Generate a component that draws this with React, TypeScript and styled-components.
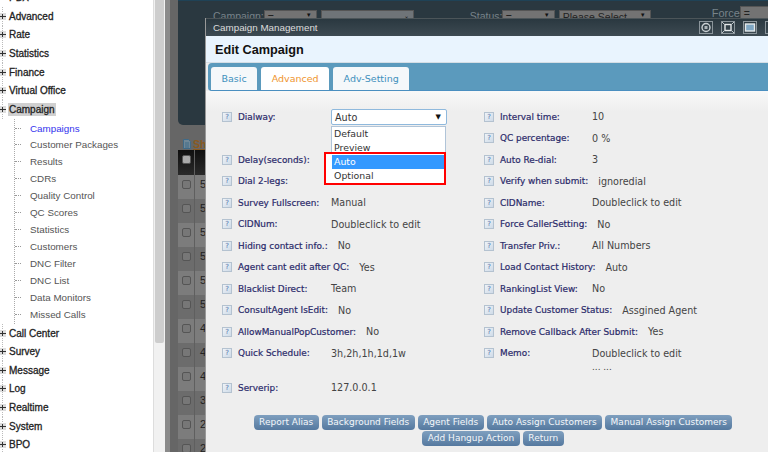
import React from "react";
import styled, { createGlobalStyle } from "styled-components";

const topMenu = ["Advanced", "Rate", "Statistics", "Finance", "Virtual Office", "Campaign"];
const bottomMenu = ["Call Center", "Survey", "Message", "Log", "Realtime", "System", "BPO"];
const subMenu = ["Campaigns", "Customer Packages", "Results", "CDRs", "Quality Control", "QC Scores", "Statistics", "Customers", "DNC Filter", "DNC List", "Data Monitors", "Missed Calls"];

const leftFields = [
  ["Delay(seconds):", ""],
  ["Dial 2-legs:", ""],
  ["Survey Fullscreen:", "Manual"],
  ["CIDNum:", "Doubleclick to edit"],
  ["Hiding contact info.:", "No"],
  ["Agent cant edit after QC:", "Yes"],
  ["Blacklist Direct:", "Team"],
  ["ConsultAgent IsEdit:", "No"],
  ["AllowManualPopCustomer:", "No"],
  ["Quick Schedule:", "3h,2h,1h,1d,1w"],
];

const rightFields = [
  ["Interval time:", "10"],
  ["QC percentage:", "0 %"],
  ["Auto Re-dial:", "3"],
  ["Verify when submit:", "ignoredial"],
  ["CIDName:", "Doubleclick to edit"],
  ["Force CallerSetting:", "No"],
  ["Transfer Priv.:", "All Numbers"],
  ["Load Contact History:", "Auto"],
  ["RankingList View:", "No"],
  ["Update Customer Status:", "Assgined Agent"],
  ["Remove Callback After Submit:", "Yes"],
  ["Memo:", "Doubleclick to edit"],
];

const HelpIcon = () => <HelpBox>?</HelpBox>;

const Field = ({ label, value }: { label: string; value: string }) => (
  <FieldRow>
    <HelpIcon />
    <FieldLabel>{label}</FieldLabel>
    <FieldValue>{value}</FieldValue>
  </FieldRow>
);

const WindowIcon = ({ kind }: { kind: string }) => (
  <WinButton>
    <svg width="12" height="11" viewBox="0 0 12 11" fill="none">
      {kind === "circle" && (
        <>
          <circle cx="6" cy="5.5" r="4" stroke="#c9cfd2" strokeWidth="1.4" />
          <rect x="4.5" y="4" width="3" height="3" fill="#aeb6ba" />
        </>
      )}
      {kind === "max" && (
        <>
          <rect x="3" y="2.5" width="6" height="6" stroke="#e4e8ea" strokeWidth="1.4" />
          <path d="M0 0l2.5 2.5M12 0L9.5 2.5M0 11l2.5-2.5M12 11L9.5 8.5" stroke="#bfc6ca" />
        </>
      )}
      {kind === "min" && <rect x="1.5" y="2" width="9" height="7" stroke="#e4e8ea" strokeWidth="1.4" fill="#7fa7c4" />}
      {kind === "close" && <path d="M3 2.5l6 6M9 2.5l-6 6" stroke="#e4e8ea" strokeWidth="1.4" />}
    </svg>
  </WinButton>
);

const App = () => {
  return (
    <Page>
      <GlobalStyle />
      <Sidebar>
        <ClippedItem>PBX</ClippedItem>
        {topMenu.map((m) => (
          <MenuItem key={m}>
            <Expander />
            <MenuText $active={m === "Campaign"}>{m}</MenuText>
          </MenuItem>
        ))}
        <SubList>
          {subMenu.map((s, i) => (
            <SubItem key={s} $active={i === 0}>
              <Dash />
              {s}
            </SubItem>
          ))}
        </SubList>
        {bottomMenu.map((m) => (
          <MenuItem key={m}>
            <Expander />
            <MenuText>{m}</MenuText>
          </MenuItem>
        ))}
      </Sidebar>
      <ScrollTrack>
        <ScrollThumb />
      </ScrollTrack>
      <Main>
        <FilterPanel>
          <FilterLabel>Campaign:</FilterLabel>
          <FakeSelect $w={53}>=<SelectArrow>▼</SelectArrow></FakeSelect>
          <FakeSelect $w={93} $light><SelectArrow>⌄</SelectArrow></FakeSelect>
          <StatusLabel>Status:</StatusLabel>
          <FakeSelect $w={53}>=<SelectArrow>▼</SelectArrow></FakeSelect>
          <FakeSelect $w={92}>Please Select<SelectArrow>▼</SelectArrow></FakeSelect>
          <ForceLabel>Force</ForceLabel>
          <FakeSelect $w={40} $raised>=</FakeSelect>
        </FilterPanel>
        <ShowRow>
          <svg width="8" height="10" viewBox="0 0 8 10">
            <path d="M.5.5h5l2 2v7h-7z" fill="#6f8797" stroke="#3f6a88" />
            <path d="M2 4h4M2 6h4M2 8h4" stroke="#3f6a88" />
          </svg>
          <ShowLink>Show</ShowLink>
        </ShowRow>
        <TableHead>
          <CheckCell><Check $head /></CheckCell>
        </TableHead>
        {[5, 5, 5, 5, 5, 5, 4, 4, 4, 3, 2, 2].map((n, i) => (
          <TableRow key={i} $odd={i % 2 === 0}>
            <CheckCell><Check /></CheckCell>
            <span>{n}</span>
          </TableRow>
        ))}
      </Main>
      <Modal>
        <TitleBar>
          <span>Campaign Management</span>
          <WinButtons>
            <WindowIcon kind="circle" />
            <WindowIcon kind="max" />
            <WindowIcon kind="min" />
            <WindowIcon kind="close" />
          </WinButtons>
        </TitleBar>
        <Heading>Edit Campaign</Heading>
        <TabStrip>
          <Tab>Basic</Tab>
          <Tab $active>Advanced</Tab>
          <Tab>Adv-Setting</Tab>
        </TabStrip>
        <Body>
          <Columns>
            <Column>
              <DialwayRow>
                <HelpIcon />
                <FieldLabel>Dialway:</FieldLabel>
                <SelectWrap>
                  <SelectBox>Auto<Caret>▼</Caret></SelectBox>
                  <OptionList>
                    <Option>Default</Option>
                    <Option>Preview</Option>
                    <Highlight>
                      <Option $selected>Auto</Option>
                      <Option>Optional</Option>
                    </Highlight>
                  </OptionList>
                </SelectWrap>
              </DialwayRow>
              {leftFields.map(([l, v]) => <Field key={l} label={l} value={v} />)}
              <ServerRow>
                <HelpIcon />
                <FieldLabel>Serverip:</FieldLabel>
                <FieldValue>127.0.0.1</FieldValue>
              </ServerRow>
            </Column>
            <RightColumn>
              {rightFields.map(([l, v]) => <Field key={l} label={l} value={v} />)}
              <Dots>... ...</Dots>
            </RightColumn>
          </Columns>
          <Buttons>
            {["Report Alias", "Background Fields", "Agent Fields", "Auto Assign Customers", "Manual Assign Customers", "Add Hangup Action", "Return"].map((b) => (
              <ActionButton key={b}>{b}</ActionButton>
            ))}
          </Buttons>
        </Body>
      </Modal>
    </Page>
  );
};

const GlobalStyle = createGlobalStyle`
  html, body { margin: 0; padding: 0; height: 100%; overflow: hidden; background: #fff; }
  * { box-sizing: border-box; }
`;

const Page = styled.div`
  position: relative;
  display: flex;
  width: 768px;
  height: 452px;
  overflow: hidden;
  font-family: "Liberation Sans", Arial, sans-serif;
`;

const Sidebar = styled.div`
  width: 153px;
  height: 452px;
  background: #fff;
  overflow: hidden;
  flex-shrink: 0;
`;

const ClippedItem = styled.div`
  height: 7px;
  line-height: 0;
  margin-top: -2px;
  padding: 0 0 9px 9px;
  font-size: 10px;
  color: #222;
  -webkit-text-stroke: 0.3px #222;
`;

const MenuItem = styled.div`
  display: flex;
  align-items: center;
  height: 18.6px;
  color: #222;
  background: repeating-linear-gradient(#bbb 0 1px, transparent 1px 2px) 2px 0 / 1px 100% no-repeat;
`;

const Expander = styled.span`
  position: relative;
  width: 6px;
  height: 7px;
  margin-right: 2px;
  flex-shrink: 0;
  background: #ddd;
  &::before {
    content: "";
    position: absolute;
    left: 0;
    right: 0;
    top: 3px;
    height: 1px;
    background: #333;
  }
  &::after {
    content: "";
    position: absolute;
    left: 2px;
    top: 1px;
    bottom: 1px;
    width: 1px;
    background: #333;
  }
`;

const MenuText = styled.span<{ $active?: boolean }>`
  font-size: 10px;
  line-height: 13px;
  padding: 0 1px;
  -webkit-text-stroke: 0.3px #222;
  background: ${(p) => (p.$active ? "#d0d0d0" : "transparent")};
`;

const SubList = styled.div`
  margin-left: 14px;
  padding: 1px 0 1px 0;
  border-left: 1px dotted #aaa;
`;

const SubItem = styled.div<{ $active?: boolean }>`
  display: flex;
  align-items: center;
  height: 16.95px;
  font-size: 9.8px;
  color: ${(p) => (p.$active ? "#3333ee" : "#555")};
`;

const Dash = styled.span`
  width: 6px;
  margin-right: 9px;
  border-top: 1px dotted #999;
`;

const ScrollTrack = styled.div`
  width: 12px;
  background: #f1f1f1;
  border-left: 1px solid #ddd;
  flex-shrink: 0;
`;

const ScrollThumb = styled.div`
  width: 9px;
  height: 343px;
  margin-left: 1px;
  background: #cdcdcd;
  border-radius: 0 0 2px 2px;
`;

const Main = styled.div`
  flex: 1;
  background: #666;
  border-left: 5px solid #8a8a8a;
  padding-left: 8px;
  overflow: hidden;
`;

const FilterPanel = styled.div`
  display: flex;
  align-items: flex-start;
  height: 125px;
  padding: 9px 0 0 35px;
  background: #2a3840;
  border-top: 1px solid #1f4256;
  border-radius: 0 0 0 5px;
  font-size: 10.5px;
  overflow: hidden;
`;

const FilterLabel = styled.span`
  width: 51px;
  color: #78838a;
`;

const StatusLabel = styled(FilterLabel)`
  width: 32px;
  margin-left: 52px;
`;

const ForceLabel = styled(FilterLabel)`
  width: 28px;
  margin: -3px 0 0 57px;
  font-size: 11px;
`;

const FakeSelect = styled.span<{ $w: number; $light?: boolean; $raised?: boolean }>`
  position: relative;
  flex-shrink: 0;
  width: ${(p) => p.$w}px;
  height: 15px;
  margin-right: 4px;
  margin-top: ${(p) => (p.$raised ? "-4px" : "0")};
  padding-left: 3px;
  background: ${(p) => (p.$light ? "#6f7478" : "#737373")};
  border: 1px solid #555;
  color: #222;
`;

const SelectArrow = styled.span`
  position: absolute;
  right: 4px;
  top: 1px;
  font-size: 6px;
  color: #111;
`;

const ShowRow = styled.div`
  display: flex;
  align-items: center;
  gap: 2px;
  height: 25px;
  padding: 12px 0 0 5px;
`;

const ShowLink = styled.span`
  font-size: 10.5px;
  font-weight: bold;
  color: #8a5a1f;
  text-decoration: underline;
`;

const TableHead = styled.div`
  display: flex;
  height: 25px;
  background: linear-gradient(#0f0f0f, #2a2a2a);
`;

const CheckCell = styled.div`
  display: flex;
  justify-content: center;
  width: 17px;
  padding-top: 5px;
  margin-right: 5px;
  border-right: 1px solid #5f5f5f;
`;

const TableRow = styled.div<{ $odd: boolean }>`
  display: flex;
  height: 24px;
  background: ${(p) => (p.$odd ? "#7c7c7c" : "#6c6c6c")};
  font-size: 11px;
  line-height: 18px;
  color: #222;
`;

const Check = styled.span<{ $head?: boolean }>`
  width: 9px;
  height: 9px;
  border: 1px solid #555;
  background: ${(p) => (p.$head ? "#aaa" : "#777")};
  border-radius: 2px;
`;

const Modal = styled.div`
  position: absolute;
  left: 205px;
  top: 18px;
  width: 563px;
  height: 434px;
  background: #eee;
  border-left: 1px solid #999;
`;

const TitleBar = styled.div`
  display: flex;
  align-items: center;
  justify-content: space-between;
  height: 18px;
  padding: 0 0 0 7px;
  background: linear-gradient(#2a3840, #3d4a52);
  border-top: 1px solid #4c5559;
  color: #ddd;
  font-size: 9.8px;
`;

const WinButtons = styled.div`
  display: flex;
  gap: 8px;
  margin-right: -11px;
`;

const WinButton = styled.span`
  display: flex;
  align-items: center;
  justify-content: center;
  width: 14px;
  height: 13px;
  border: 1px solid #8b959b;
`;

const Heading = styled.div`
  height: 27px;
  padding-left: 9px;
  line-height: 28px;
  background: #e9f4fe;
  border-bottom: 1px solid #d5dee5;
  font-size: 12.7px;
  font-weight: bold;
  color: #111;
`;

const TabStrip = styled.div`
  display: flex;
  align-items: flex-end;
  gap: 4px;
  height: 28px;
  margin-left: 2px;
  padding-left: 3px;
  background: #5b9abd;
  border-bottom: 1px solid #4a8fc0;
  border-radius: 4px 0 0 4px;
`;

const Tab = styled.div<{ $active?: boolean }>`
  height: 23px;
  padding: 0 10.5px;
  line-height: 23px;
  background: ${(p) => (p.$active ? "#fff" : "#f5f8fa")};
  border-radius: 3px 3px 0 0;
  font-family: "DejaVu Sans", sans-serif;
  font-size: 9.5px;
  color: ${(p) => (p.$active ? "#f0952e" : "#3f90bd")};
`;

const Body = styled.div`
  padding: 15px 0 0 16px;
  background: linear-gradient(#f8f8f8, #eee 20px);
  font-family: "DejaVu Sans", sans-serif;
  font-size: 8.9px;
`;

const Columns = styled.div`
  display: grid;
  grid-template-columns: 262px 1fr;
  height: 309px;
`;

const Column = styled.div`
  display: flex;
  flex-direction: column;
`;

const FieldRow = styled.div`
  display: flex;
  align-items: center;
  height: 21.5px;
`;

const DialwayRow = styled(FieldRow)`
  height: 43px;
  align-items: flex-start;
  padding-top: 6px;
`;

const ServerRow = styled(FieldRow)`
  margin-top: 13px;
`;

const HelpBox = styled.span`
  display: inline-flex;
  align-items: center;
  justify-content: center;
  width: 10px;
  height: 10px;
  margin-right: 6px;
  flex-shrink: 0;
  background: linear-gradient(135deg, #eef3f8, #cfdbe8);
  border: 1px solid #b4c2d0;
  color: #4a70a8;
  font-size: 7px;
`;

const FieldLabel = styled.span`
  min-width: 93px;
  padding-right: 10px;
  color: #2a2a6a;
  white-space: nowrap;
  -webkit-text-stroke: 0.2px #2a2a6a;
`;

const RightColumn = styled(Column)`
  ${FieldLabel} {
    min-width: 92px;
  }
`;

const FieldValue = styled.span`
  font-size: 9.6px;
  color: #444;
  white-space: nowrap;
`;

const SelectWrap = styled.div`
  position: relative;
  width: 116px;
`;

const SelectBox = styled.div`
  position: relative;
  height: 16px;
  margin-top: -3px;
  padding-left: 3px;
  line-height: 15px;
  font-size: 9.6px;
  background: #fff;
  border: 1px solid #8fb9dd;
  border-radius: 2px;
  color: #333;
`;

const Caret = styled.span`
  position: absolute;
  right: 5px;
  top: 0;
  font-size: 7px;
  color: #111;
`;

const OptionList = styled.div`
  position: absolute;
  left: 0;
  top: 14px;
  width: 115px;
  padding-bottom: 1px;
  background: #fff;
  border: 1px solid #b0c4d8;
  z-index: 2;
`;

const Option = styled.div<{ $selected?: boolean }>`
  height: 14px;
  padding-left: 2px;
  line-height: 14px;
  font-size: 9.4px;
  background: ${(p) => (p.$selected ? "#3399ff" : "transparent")};
  color: ${(p) => (p.$selected ? "#fff" : "#333")};
`;

const Highlight = styled.div`
  margin: -3px -1px -2px -8px;
  padding: 1px 0 0 6px;
  border: 2px solid #f00;
  background: #fff;
`;

const Dots = styled.div`
  margin-top: -2px;
  padding-left: 108px;
  color: #444;
`;

const Buttons = styled.div`
  display: flex;
  flex-wrap: wrap;
  justify-content: center;
  gap: 1px 3px;
  padding-right: 4px;
`;

const ActionButton = styled.span`
  height: 15px;
  padding: 0 5.5px;
  line-height: 15px;
  font-size: 9px;
  background: linear-gradient(#7f9fbf, #55799f);
  border-radius: 4px;
  color: #f4f7fa;
  white-space: nowrap;
`;

export default App;
